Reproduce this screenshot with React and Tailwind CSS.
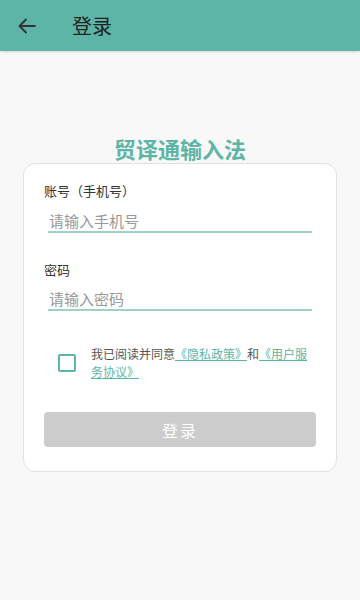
import React from "react";

export default function App() {
  const font = { fontFamily: '"Noto Sans CJK SC", "Noto Sans", sans-serif' };
  return (
    <div className="w-[360px] h-[600px] bg-[#f8f8f8] flex flex-col" style={font}>
      <div className="h-[51px] bg-[#5db5a7] flex items-center shadow-sm">
        <svg className="ml-[18px]" width="18" height="16" viewBox="0 0 18 16" fill="none" stroke="#333" strokeWidth="1.8" strokeLinecap="round" strokeLinejoin="round">
          <path d="M17 8H2M8 1.5L1.5 8L8 14.5" />
        </svg>
        <span className="ml-[36px] text-[20px] text-[#222] leading-none">登录</span>
      </div>
      <div className="mt-[82px] text-center text-[22px] font-bold text-[#5db5a7] leading-[30px]">贸译通输入法</div>
      <div className="mx-[23px] mt-0 h-[309px] bg-white rounded-[12px] border border-[#e2e2e2] px-[20px] pt-[18px]">
        <div className="text-[13px] text-[#333] leading-[18px]">账号（手机号）</div>
        <div className="mt-[6px] mx-[4px] border-b-2 border-[#9fd1c7] h-[27px] flex items-end pb-[2px]">
          <span className="text-[15px] text-[#999] leading-[16px] pl-[1px]">请输入手机号</span>
        </div>
        <div className="mt-[28px] text-[13px] text-[#333] leading-[18px]">密码</div>
        <div className="mt-[5px] mx-[4px] border-b-2 border-[#9fd1c7] h-[27px] flex items-end pb-[2px]">
          <span className="text-[15px] text-[#999] leading-[16px] pl-[1px]">请输入密码</span>
        </div>
        <div className="mt-[34px] flex items-start">
          <div className="ml-[14px] mt-[9px] w-[18px] h-[18px] border-2 border-[#5db5a7] rounded-[2px] shrink-0"></div>
          <p className="ml-[15px] text-[12px] leading-[18px] text-[#555] w-[230px]">
            我已阅读并同意<a className="text-[#5db5a7] underline">《隐私政策》</a>和<a className="text-[#5db5a7] underline">《用户服务协议》</a>
          </p>
        </div>
        <div className="mt-[31px] h-[35px] bg-[#cccccc] rounded-[4px] flex items-center justify-center text-white text-[16px] tracking-[2px]">登录</div>
      </div>
    </div>
  );
}
